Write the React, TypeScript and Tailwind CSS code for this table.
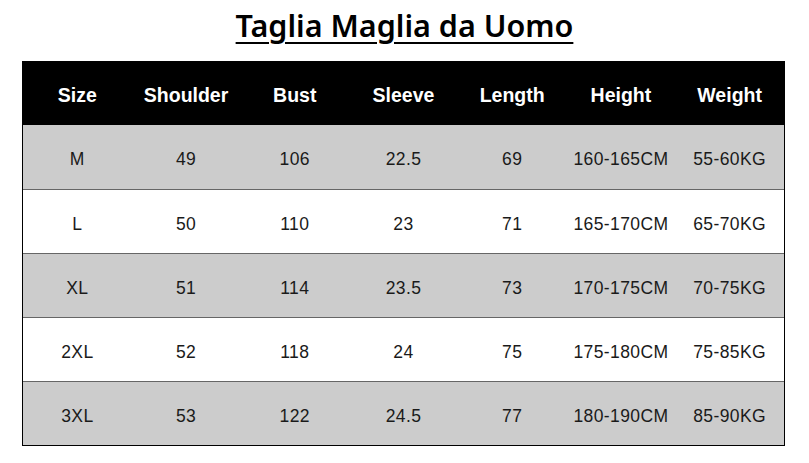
import React from "react";

const headers = ["Size", "Shoulder", "Bust", "Sleeve", "Length", "Height", "Weight"];

const rows = [
  ["M", "49", "106", "22.5", "69", "160-165CM", "55-60KG"],
  ["L", "50", "110", "23", "71", "165-170CM", "65-70KG"],
  ["XL", "51", "114", "23.5", "73", "170-175CM", "70-75KG"],
  ["2XL", "52", "118", "24", "75", "175-180CM", "75-85KG"],
  ["3XL", "53", "122", "24.5", "77", "180-190CM", "85-90KG"],
];

const App = () => {
  return (
    <div className="w-[809px] h-[463px] bg-white font-['Liberation_Sans',Arial,sans-serif]">
      <div className="h-[61px] flex items-start justify-center pt-[6px]">
        <h1 className="text-[30.5px] font-semibold text-black underline underline-offset-[5px] decoration-[2px] font-['Noto_Sans',sans-serif] leading-[38px]">
          Taglia Maglia da Uomo
        </h1>
      </div>

      <div className="ml-[22px] w-[763px] border-x-[1.5px] border-b-[1.5px] border-black">
        <div className="grid grid-cols-7 h-[64px] pt-[5px] bg-black text-white items-center">
          {headers.map((h) => (
            <span key={h} className="text-center text-[19.5px] font-bold">
              {h}
            </span>
          ))}
        </div>
        {rows.map((row, i) => (
          <div
            key={row[0]}
            className={`grid grid-cols-7 items-center pt-[5px] text-[#1a1a1a] text-[17.5px] ${
              i > 0 ? "h-[64px] border-t border-[#666666]" : "h-[64px]"
            } ${i % 2 === 0 ? "bg-[#cccccc]" : "bg-white"}`}
          >
            {row.map((cell, j) => (
              <span key={j} className="text-center tracking-[0.4px]">
                {cell}
              </span>
            ))}
          </div>
        ))}
      </div>
    </div>
  );
};

export default App;
